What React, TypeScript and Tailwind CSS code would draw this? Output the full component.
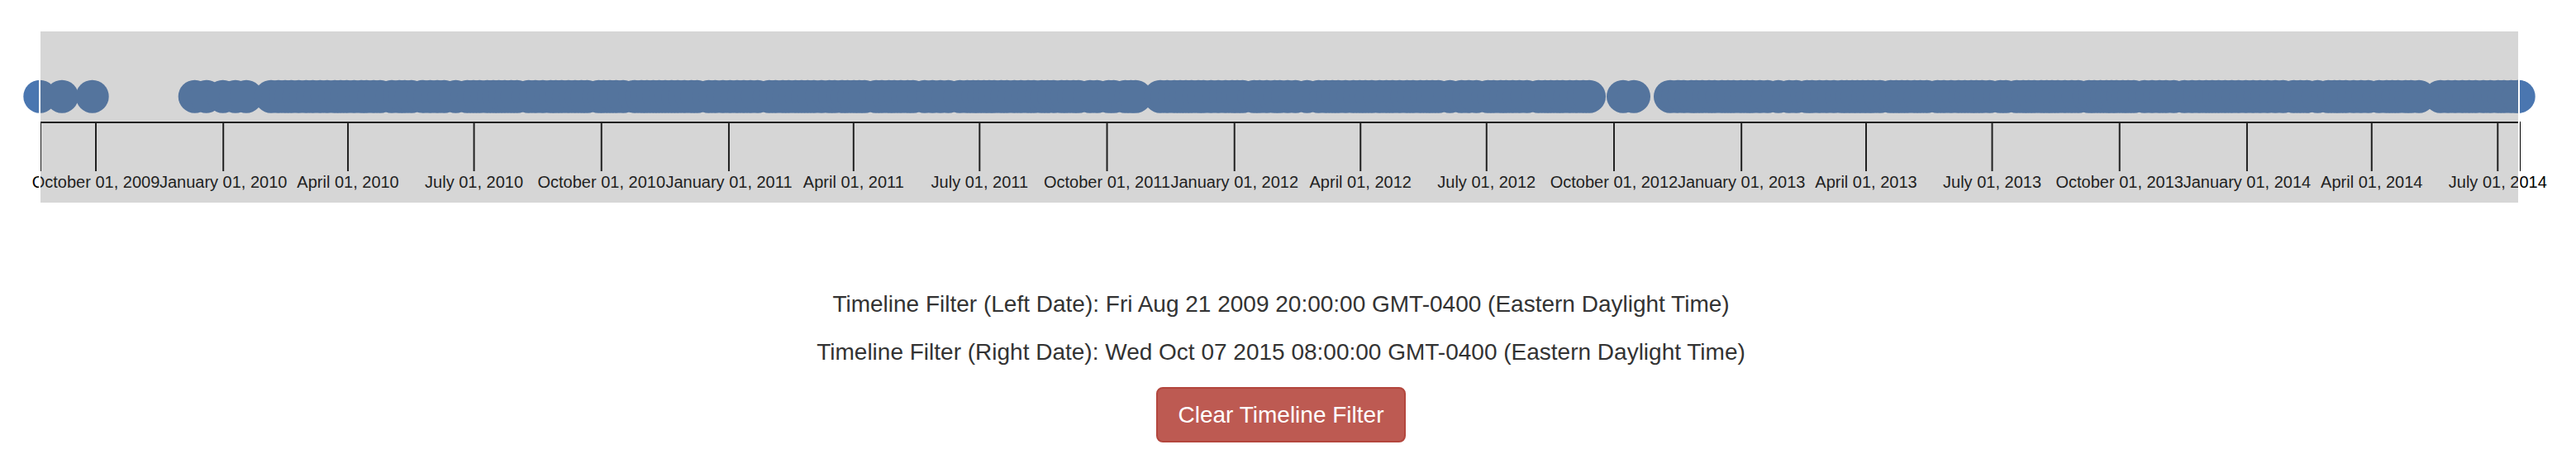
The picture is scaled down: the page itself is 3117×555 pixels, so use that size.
import React from "react";

const X0 = 116; // October 01, 2009
const PX_PER_DAY = 2906.3 / 1734;
const DAY = 86400000;

function xFor(y: number, m: number): number {
  const d = (Date.UTC(y, m, 1) - Date.UTC(2009, 9, 1)) / DAY;
  return X0 + d * PX_PER_DAY;
}

const MONTHS = ["January", "April", "July", "October"];

const ticks: { x: number; label: string }[] = [];
for (let y = 2009; y <= 2014; y++) {
  for (let q = 0; q < 4; q++) {
    const m = q * 3;
    if (y === 2009 && m < 9) continue;
    if (y === 2014 && m > 6) continue;
    ticks.push({ x: xFor(y, m), label: `${MONTHS[q]} 01, ${y}` });
  }
}

let seed = 7;
function rand(): number {
  seed = (seed * 16807) % 2147483647;
  return (seed - 1) / 2147483646;
}

function band(start: number, end: number, minStep: number, maxStep: number): number[] {
  const out: number[] = [start];
  let x = start;
  while (x < end) {
    const r = rand();
    const step = r > 0.9 ? maxStep : minStep + r * 4;
    x = Math.min(end, x + step);
    out.push(x);
  }
  return out;
}

const circles: number[] = [
  48.3,
  75,
  111.7,
  ...band(235.7, 298, 14, 20),
  ...band(328, 1374, 6, 14),
  ...band(1404, 1923, 6, 14),
  1964,
  1977,
  ...band(2021, 2927, 6, 13),
  ...band(2953, 3047.7, 6, 12),
];

const CY = 116.7;

export default function App() {
  return (
    <div className="w-full bg-white font-['Liberation_Sans',Arial,sans-serif] text-[#333]">
      <svg width={3117} height={260} className="block overflow-visible">
        <g fill="#4a76b0">
          {circles.map((cx, i) => (
            <circle key={i} cx={cx} cy={CY} r={20} />
          ))}
        </g>
        <g fill="none" stroke="#000" strokeWidth={2}>
          <path d="M49,207V148H3049V207" />
          {ticks.map((t, i) => (
            <line key={i} x1={t.x} x2={t.x} y1={148} y2={207} />
          ))}
        </g>
        <g fill="#000" fontSize={20} textAnchor="middle">
          {ticks.map((t, i) => (
            <text key={i} x={t.x} y={227}>
              {t.label}
            </text>
          ))}
        </g>
        <rect x={47} y={38} width={2} height={207} fill="#fff" />
        <rect x={3047} y={38} width={2} height={207} fill="#fff" />
        <rect x={49} y={38} width={2998} height={207} fill="#707070" fillOpacity={0.287} />
      </svg>
      <div className="flex flex-col items-center pr-[17px]">
        <p className="mt-[92px] text-[28px] leading-[32px]">
          Timeline Filter (Left Date): Fri Aug 21 2009 20:00:00 GMT-0400 (Eastern Daylight Time)
        </p>
        <p className="mt-[26px] text-[28px] leading-[32px]">
          Timeline Filter (Right Date): Wed Oct 07 2015 08:00:00 GMT-0400 (Eastern Daylight Time)
        </p>
        <button
          type="button"
          className="mt-[26px] h-[67px] w-[302px] rounded-[8px] border-2 border-[#b3463d] bg-[#bd5a52] text-[28px] leading-[40px] text-white"
        >
          Clear Timeline Filter
        </button>
      </div>
    </div>
  );
}
